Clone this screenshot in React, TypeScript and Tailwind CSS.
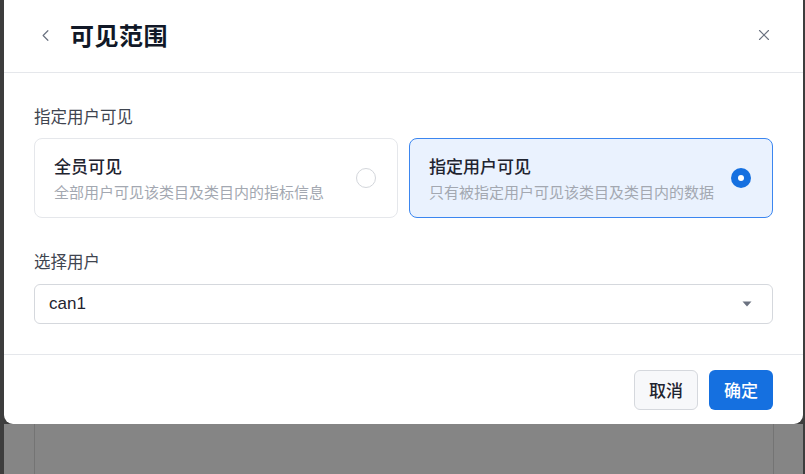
import { ChevronLeft, X } from "lucide-react";

const font = { fontFamily: '"Noto Sans CJK SC", "Noto Sans", sans-serif' };

const Option = ({ title, desc, active }: { title: string; desc: string; active?: boolean }) => (
  <div
    className={`flex-1 h-[80px] rounded-lg border flex items-center justify-between pl-[19px] pr-[21px] ${
      active ? "border-[#3b86f0] bg-[#eaf2fe]" : "border-[#e5e7eb] bg-white"
    }`}
  >
    <div className="flex flex-col">
      <span className="text-[17px] leading-[22px] font-medium text-[#1f2430]">{title}</span>
      <span className="text-[15px] leading-[20px] mt-[5px] text-[#a3a8b1]">{desc}</span>
    </div>
    {active ? (
      <span className="w-[20px] h-[20px] rounded-full bg-[#1570e0] flex items-center justify-center">
        <span className="w-[6px] h-[6px] rounded-full bg-white" />
      </span>
    ) : (
      <span className="w-[20px] h-[20px] rounded-full border border-[#d3d6db] bg-white" />
    )}
  </div>
);

export default function App() {
  return (
    <div className="w-[805px] h-[474px] flex bg-[#3d3d3d] overflow-hidden" style={font}>
      <div className="w-[4px] shrink-0" />
      <div className="w-[799px] flex flex-col">
        <div className="h-[424px] bg-white rounded-b-[9px] flex flex-col shrink-0">
          {/* Header */}
          <div className="h-[73px] border-b border-[#e5e7eb] flex items-center pl-[32px] pr-[30px] pb-[2px]">
            <ChevronLeft className="w-[19px] h-[19px] text-[#6b7280]" strokeWidth={1.5} />
            <span className="ml-[15px] text-[24px] font-bold text-[#111827] tracking-[0.5px]">可见范围</span>
            <X className="ml-auto w-[18px] h-[18px] text-[#6b7280]" strokeWidth={1.5} />
          </div>
          {/* Body */}
          <div className="flex flex-col px-[30px] pt-[32px]">
            <span className="text-[16.5px] leading-[22px] text-[#3f4550]">指定用户可见</span>
            <div className="flex gap-[11px] mt-[11px]">
              <Option title="全员可见" desc="全部用户可见该类目及类目内的指标信息" />
              <Option title="指定用户可见" desc="只有被指定用户可见该类目及类目内的数据" active />
            </div>
            <span className="text-[16.5px] leading-[22px] text-[#3f4550] mt-[32px]">选择用户</span>
            <div className="mt-[12px] h-[40px] rounded-md border border-[#d5d8dd] flex items-center pl-[14px] pr-[20px]">
              <span className="text-[17px] text-[#1f2430]" style={{ fontFamily: '"Liberation Sans", sans-serif' }}>
                can1
              </span>
              <svg className="ml-auto" width="10" height="6" viewBox="0 0 10 6">
                <path d="M0.5 0.5 L9.5 0.5 L5 5.5 Z" fill="#6b7280" />
              </svg>
            </div>
          </div>
          {/* Footer */}
          <div className="mt-auto h-[70px] border-t border-[#e5e7eb] flex items-center justify-end gap-[11px] pr-[30px]">
            <button className="w-[64px] h-[40px] rounded-md border border-[#d5d8dd] bg-[#f7f8fa] text-[17px] font-medium text-[#1f2430]">
              取消
            </button>
            <button className="w-[64px] h-[40px] rounded-md bg-[#1570e0] text-[17px] font-medium text-white">
              确定
            </button>
          </div>
        </div>
        <div className="flex-1 bg-[#858585] pl-[30px] pr-[29px]">
          <div className="h-full border-l border-r border-[#747474]" />
        </div>
      </div>
      <div className="w-[2px] shrink-0" />
    </div>
  );
}
